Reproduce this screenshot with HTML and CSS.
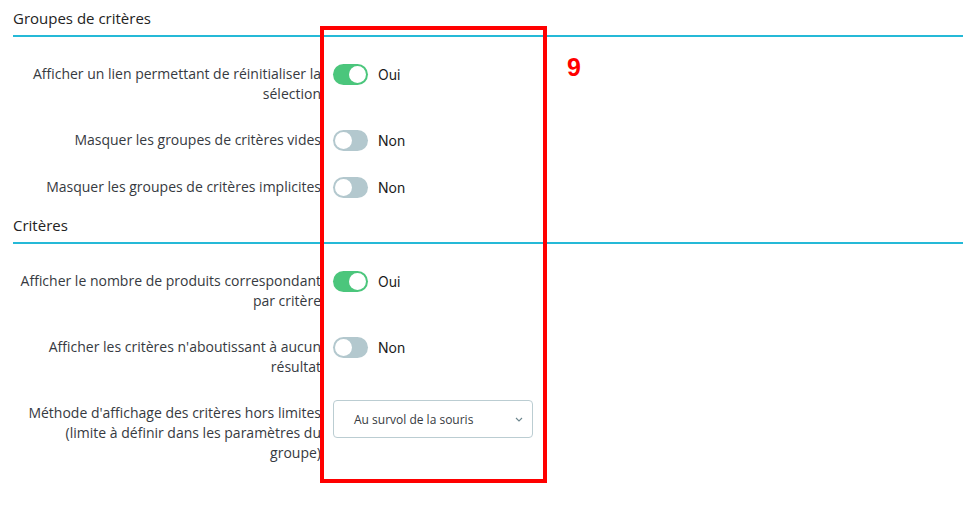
FILE: index.html
```html
<!DOCTYPE html>
<html lang="fr">
<head>
<meta charset="utf-8">
<title>Groupes de critères</title>
<link rel="stylesheet" href="styles.css">
</head>
<body>
<div class="page">
  <section class="section">
    <h2 class="section-title">Groupes de critères</h2>
    <div class="rows">
      <div class="row">
        <label class="label">Afficher un lien permettant de réinitialiser la sélection</label>
        <div class="control"><span class="switch on"><span class="knob"></span></span><span class="state">Oui</span></div>
      </div>
      <div class="row">
        <label class="label">Masquer les groupes de critères vides</label>
        <div class="control"><span class="switch"><span class="knob"></span></span><span class="state">Non</span></div>
      </div>
      <div class="row">
        <label class="label">Masquer les groupes de critères implicites</label>
        <div class="control"><span class="switch"><span class="knob"></span></span><span class="state">Non</span></div>
      </div>
    </div>
  </section>
  <section class="section second">
    <h2 class="section-title">Critères</h2>
    <div class="rows">
      <div class="row">
        <label class="label">Afficher le nombre de produits correspondant par critère</label>
        <div class="control"><span class="switch on"><span class="knob"></span></span><span class="state">Oui</span></div>
      </div>
      <div class="row">
        <label class="label">Afficher les critères n'aboutissant à aucun résultat</label>
        <div class="control"><span class="switch"><span class="knob"></span></span><span class="state">Non</span></div>
      </div>
      <div class="row">
        <label class="label">Méthode d'affichage des critères hors limites (limite à définir dans les paramètres du groupe)</label>
        <div class="control select-control">
          <div class="select">
            <span class="select-text">Au survol de la souris</span>
            <svg class="chevron" width="8" height="5" viewBox="0 0 8 5"><path d="M1 1 L4 4 L7 1" fill="none" stroke="#6c868e" stroke-width="1.1"/></svg>
          </div>
        </div>
      </div>
    </div>
  </section>
</div>
<div class="highlight"></div>
<div class="badge">9</div>
</body>
</html>
```
FILE: styles.css
```css
html, body {
  margin: 0;
  padding: 0;
  background: #ffffff;
}
body {
  font-family: "Open Sans", "Liberation Sans", sans-serif;
  color: #363a41;
  width: 976px;
  height: 506px;
  overflow: hidden;
  position: relative;
}
.page {
  padding: 0 13px;
}
.section-title {
  margin: 0;
  font-size: 15px;
  font-weight: 400;
  line-height: 20px;
  color: #232323;
  padding: 8px 0 7px;
  border-bottom: 2px solid #25b9d7;
}
.rows {
  display: flex;
  flex-direction: column;
  gap: 19px;
  padding-top: 20px;
}
.second {
  margin-top: 9px;
}
.row {
  display: flex;
  align-items: flex-start;
}
.label {
  width: 308px;
  flex: none;
  text-align: right;
  font-size: 14px;
  line-height: 20px;
  padding-top: 7px;
  color: #363a41;
}
.control {
  margin-left: 12px;
  display: flex;
  align-items: center;
  gap: 10px;
  padding-top: 7px;
}
.switch {
  width: 35px;
  height: 21px;
  border-radius: 11px;
  background: #b3c8ce;
  display: flex;
  align-items: center;
  padding: 0 2px;
  box-sizing: border-box;
}
.switch .knob {
  width: 17px;
  height: 17px;
  border-radius: 50%;
  background: #ffffff;
}
.switch.on {
  background: #4bc67c;
  justify-content: flex-end;
}
.state {
  font-family: Inter, "Liberation Sans", sans-serif;
  font-size: 14px;
  color: #1b1b1b;
}
.select-control {
  padding-top: 4px;
}
.select {
  width: 200px;
  height: 38px;
  box-sizing: border-box;
  border: 1px solid #bbcdd2;
  border-radius: 4px;
  display: flex;
  align-items: center;
  justify-content: space-between;
  padding: 0 9px 0 20px;
}
.select-text {
  font-size: 12px;
  color: #363a41;
}
.chevron {
  display: block;
}
.highlight {
  position: absolute;
  left: 320px;
  top: 26px;
  width: 227px;
  height: 457px;
  box-sizing: border-box;
  border: 4px solid #ff0000;
}
.badge {
  position: absolute;
  left: 567px;
  top: 52px;
  font-family: "Liberation Sans", Arial, sans-serif;
  font-weight: 700;
  font-size: 25px;
  line-height: 30px;
  color: #ff0000;
}
```
